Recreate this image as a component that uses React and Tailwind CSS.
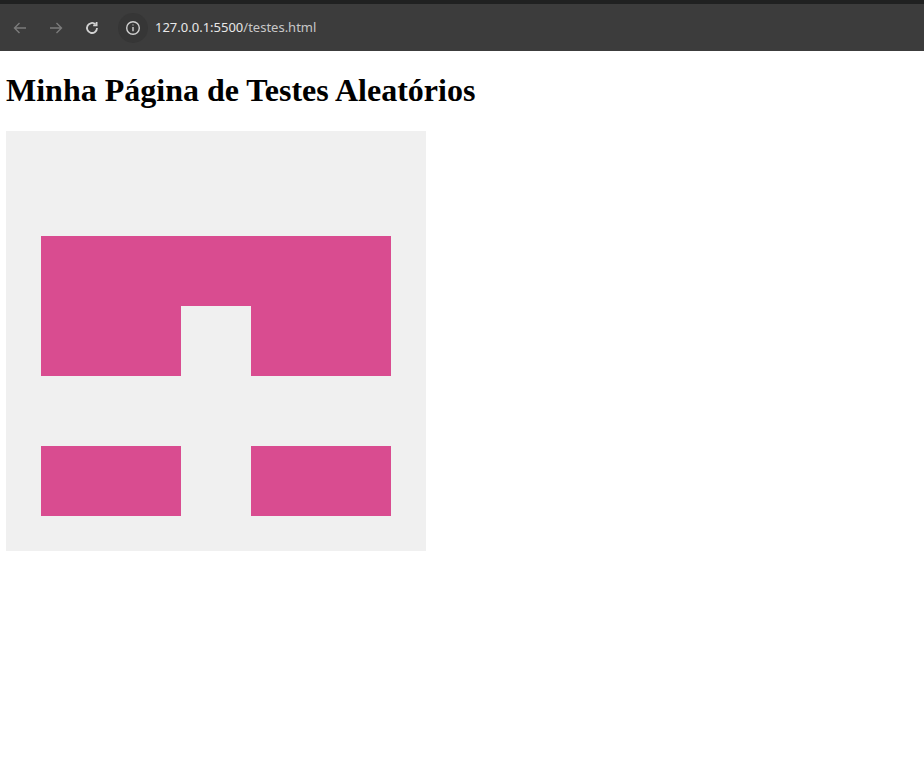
import React from "react";

const cells = [
  [0, 0, 0, 0, 0],
  [1, 1, 1, 1, 1],
  [1, 1, 0, 1, 1],
  [0, 0, 0, 0, 0],
  [1, 1, 0, 1, 1],
];

function Identicon() {
  return (
    <div className="w-[420px] h-[420px] bg-[#f0f0f0] p-[35px]">
      <div className="grid grid-cols-5 grid-rows-5 w-[350px] h-[350px]">
        {cells.flat().map((c, i) => (
          <div key={i} className={c ? "bg-[#d94c90]" : ""} />
        ))}
      </div>
    </div>
  );
}

export default function App() {
  return (
    <div className="min-h-[780px] bg-white">
      <div className="h-[4px] bg-[#202121]" />
      <div className="h-[47px] bg-[#3c3c3c] flex items-center">
        <div className="w-[40px] flex justify-center ml-0">
          <svg width="16" height="16" viewBox="0 0 16 16" fill="none" stroke="#7b7b7b" strokeWidth="1.4">
            <path d="M14 8H2.5M7.5 3L2.5 8l5 5" />
          </svg>
        </div>
        <div className="w-[32px] flex justify-center">
          <svg width="16" height="16" viewBox="0 0 16 16" fill="none" stroke="#7b7b7b" strokeWidth="1.4">
            <path d="M2 8h11.5M8.5 3l5 5-5 5" />
          </svg>
        </div>
        <div className="w-[40px] flex justify-center">
          <svg width="16" height="16" viewBox="0 0 16 16" fill="none" stroke="#d2d2d2" strokeWidth="1.8">
            <path d="M13 8a5 5 0 1 1-1.5-3.6" />
            <path d="M12.6 2v3.4H9.2" strokeLinejoin="miter" />
          </svg>
        </div>
        <div className="ml-[6px] w-[30px] h-[30px] rounded-full bg-[#363636] flex items-center justify-center">
          <svg width="16" height="16" viewBox="0 0 16 16" fill="none" stroke="#d0d0d0" strokeWidth="1.4">
            <circle cx="8" cy="8" r="6.3" />
            <path d="M8 7v4.2" />
            <circle cx="8" cy="4.9" r="0.6" fill="#d0d0d0" stroke="none" />
          </svg>
        </div>
        <div
          className="ml-[7px] text-[13px]"
          style={{ fontFamily: '"Noto Sans", "Open Sans", sans-serif' }}
        >
          <span className="text-[#e8e8e8]">127.0.0.1:5500</span>
          <span className="text-[#c8c8c8]">/testes.html</span>
        </div>
      </div>
      <div className="pl-[6px]">
        <h1
          className="text-[32px] font-bold leading-[37px] text-black pt-[21px] pb-[22px] m-0"
          style={{ fontFamily: '"Liberation Serif", "Times New Roman", serif' }}
        >
          Minha Página de Testes Aleatórios
        </h1>
        <Identicon />
      </div>
    </div>
  );
}
